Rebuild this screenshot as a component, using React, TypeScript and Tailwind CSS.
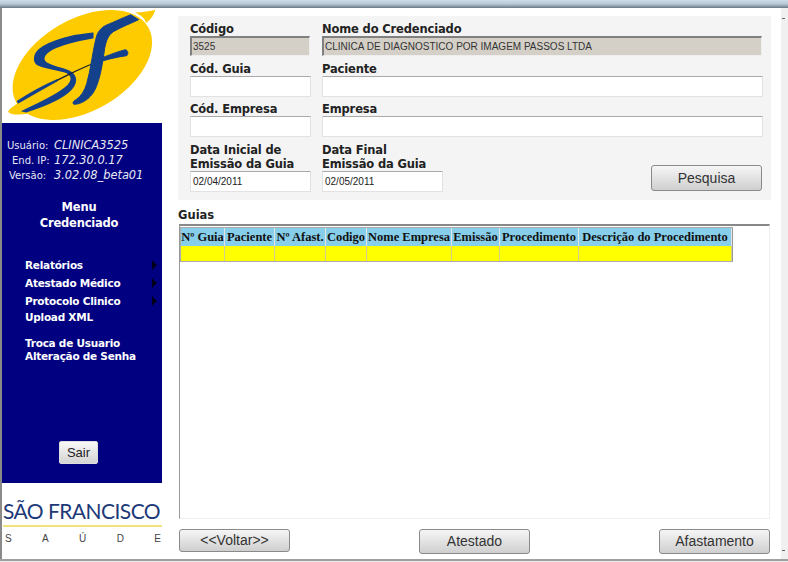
const labelFont = "font-['Tahoma','DejaVu_Sans',sans-serif]";

const guiaColumns = [
  { title: 'Nº Guia', width: 'w-[44px]' },
  { title: 'Paciente', width: 'w-[50px]' },
  { title: 'Nº Afast.', width: 'w-[51px]' },
  { title: 'Codigo', width: 'w-[41px]' },
  { title: 'Nome Empresa', width: 'w-[85px]' },
  { title: 'Emissão', width: 'w-[48px]' },
  { title: 'Procedimento', width: 'w-[79px]' },
  { title: 'Descrição do Procedimento', width: 'w-[153px]' },
];

function SfLogo() {
  return (
    <svg viewBox="6 9 480 345" className="block w-[160px] h-[115px]">
      <ellipse cx="247" cy="180" rx="228" ry="138" transform="rotate(-30 247 180)" fill="#fecb00" />
      {/* swoosh tips */}
      <path d="M405 22 C430 22 450 18 466 14 C462 30 452 44 438 54 C436 40 420 30 405 22 Z" fill="#fecb00" />
      <path d="M60 292 C44 300 30 310 24 320 C32 330 56 330 84 326 C70 316 62 304 60 292 Z" fill="#fecb00" />
      {/* S */}
      <path
        d="M278 85 C220 90 150 108 118 134 C102 148 100 168 112 178 C130 190 170 190 200 202 C218 212 218 226 204 242 C176 270 120 294 70 318 L78 320 C130 304 186 282 214 252 C236 226 226 206 200 196 C176 186 146 184 134 170 C124 156 140 138 170 126 C204 112 244 104 278 98 Z"
        fill="#14418c"
        stroke="#14418c"
        strokeWidth="5"
      />
      {/* sweep */}
      <path d="M50 288 C90 262 130 240 172 222 L174 228 C134 250 94 274 54 296 Z" fill="#14418c" />
      <path d="M170 224 C210 204 250 186 292 168 L292 172 C252 188 212 208 172 228 Z" fill="#1a2030" />
      <path d="M284 168 C316 154 346 142 376 134 C384 136 386 146 380 152 C350 156 316 164 288 174 Z" fill="#14418c" stroke="#14418c" strokeWidth="3" />
      {/* F */}
      <path
        d="M392 29 L416 44 C390 56 360 68 340 80 C324 90 318 110 314 130 C308 170 302 220 284 256 C270 282 244 298 222 298 C216 294 220 288 228 284 C244 274 254 256 260 236 C272 196 278 140 288 100 C292 82 302 68 320 60 C344 50 370 38 392 29 Z"
        fill="#14418c"
        stroke="#14418c"
        strokeWidth="3"
      />
    </svg>
  );
}

function SideMenuItem({ label, arrow, className }: { label: string; arrow?: boolean; className: string }) {
  return (
    <div className={`flex items-center justify-between pl-[23px] pr-[5px] text-[10.5px] tracking-[-0.25px] font-bold text-white ${className}`}>
      <span>{label}</span>
      {arrow && (
        <span className="w-0 h-0 border-y-[5px] border-y-transparent border-l-[5px] border-l-[#00001a]" />
      )}
    </div>
  );
}

function Field({
  label,
  value,
  disabled,
  className,
}: {
  label: React.ReactNode;
  value?: string;
  disabled?: boolean;
  className: string;
}) {
  return (
    <div className={`flex flex-col ${className}`}>
      <div className={`${labelFont} text-[11.5px] tracking-[-0.15px] leading-[14px] font-bold text-[#222]`}>{label}</div>
      <div
        className={
          disabled
            ? "mt-auto h-[20px] bg-[#d4d0c8] border-t-2 border-l-2 border-t-[#808080] border-l-[#808080] border-r border-b border-r-[#eee] border-b-[#eee] pl-px flex items-center font-['Liberation_Sans',sans-serif] text-[10px] text-[#333]"
            : "mt-auto h-[21px] bg-white border border-[#e2e2e2] border-t-[#aaa] pl-[2px] flex items-center font-['Liberation_Sans',sans-serif] text-[10px] text-[#222]"
        }
      >
        {value}
      </div>
    </div>
  );
}

function GrayButton({ label, className }: { label: string; className: string }) {
  return (
    <button
      className={`w-[111px] border border-[#8a8a8a] rounded-[3px] bg-gradient-to-b from-[#f6f6f6] to-[#cfcfcf] font-['Liberation_Sans',sans-serif] text-[14px] text-[#333] ${className}`}
    >
      {label}
    </button>
  );
}

export default function App() {
  return (
    <div className="w-[788px] h-[562px] overflow-hidden flex flex-col bg-white font-['Liberation_Sans',sans-serif]">
      {/* browser chrome */}
      <div className="h-[8px] shrink-0 bg-gradient-to-b from-[#cfdde8] via-[#b7c9d8] to-[#6b7a86]" />

      <div className="flex flex-1 min-h-0 border-l-2 border-l-[#8a8a8a]">
        {/* side column */}
        <div className="w-[160px] shrink-0 mr-[16px] flex flex-col">
          <SfLogo />
          <div className="h-[360px] w-[160px] bg-[#000080] flex flex-col">
            <div className={`${labelFont} pt-[15px] text-[10px] leading-[15px] text-[#e8e8f4]`}>
              <div className="flex h-[15px]">
                <span className="w-[52px] pl-[5px]">Usuário:</span>
                <span className="italic text-[11.4px]">CLINICA3525</span>
              </div>
              <div className="flex h-[15px]">
                <span className="w-[52px] pl-[10px]">End. IP:</span>
                <span className="italic text-[11.4px]">172.30.0.17</span>
              </div>
              <div className="flex h-[15px]">
                <span className="w-[52px] pl-[7px]">Versão:</span>
                <span className="italic text-[11.4px]">3.02.08_beta01</span>
              </div>
            </div>
            <div className={`${labelFont} mt-[16px] pr-[6px] text-center text-[11.5px] tracking-[-0.2px] leading-[16px] font-bold text-white`}>
              <div>Menu</div>
              <div>Credenciado</div>
            </div>
            <div className={`${labelFont} mt-[25px] leading-[14px]`}>
              <SideMenuItem label="Relatórios" arrow className="h-[18px]" />
              <SideMenuItem label="Atestado Médico" arrow className="h-[18px]" />
              <SideMenuItem label="Protocolo Clinico" arrow className="h-[18px]" />
              <SideMenuItem label="Upload XML" className="h-[14px]" />
              <SideMenuItem label="Troca de Usuario" className="h-[13px] mt-[12px]" />
              <SideMenuItem label="Alteração de Senha" className="h-[13px]" />
            </div>
            <button className="mt-auto mb-[19px] ml-[57px] w-[39px] h-[23px] border border-[#ddd] rounded-[2px] bg-gradient-to-b from-[#f8f8f8] to-[#d4d4d4] text-[13px] text-[#222]">
              Sair
            </button>
          </div>
          <div className="pl-px">
            <div className="mt-[16px] text-[21px] leading-[24px] tracking-[-0.55px] text-[#1d3a78] font-['Lato',sans-serif] whitespace-nowrap">
              SÃO FRANCISCO
            </div>
            <div className="mt-[2px] h-[2px] bg-[#f2e27a]" />
            <div className="mt-[6px] flex justify-between pl-[2px] pr-[1px] text-[10px] leading-[12px] text-[#444]">
              <span>S</span>
              <span>A</span>
              <span>Ú</span>
              <span>D</span>
              <span>E</span>
            </div>
          </div>
        </div>

        {/* main column */}
        <div className="w-[593px] shrink-0 flex flex-col pt-[8px]">
          <div className="h-[184px] bg-[#f4f4f4] pl-[12px] pr-[8px] pt-[6px] flex flex-col">
            <div className="flex gap-[12px] h-[34px]">
              <Field label="Código" value="3525" disabled className="w-[120px]" />
              <Field label="Nome do Credenciado" value="CLINICA DE DIAGNOSTICO POR IMAGEM PASSOS LTDA" disabled className="w-[440px]" />
            </div>
            <div className="flex gap-[11px] h-[35px] mt-[6px]">
              <Field label="Cód. Guia" className="w-[121px]" />
              <Field label="Paciente" className="w-[441px]" />
            </div>
            <div className="flex gap-[11px] h-[35px] mt-[5px]">
              <Field label="Cód. Empresa" className="w-[121px]" />
              <Field label="Empresa" className="w-[441px]" />
            </div>
            <div className="flex gap-[11px] h-[50px] mt-[5px] items-start">
              <Field
                label={<div className="pt-px">Data Inicial de<br />Emissão da Guia</div>}
                value="02/04/2011"
                className="w-[121px] h-[50px]"
              />
              <Field
                label={<div className="pt-px">Data Final<br />Emissão da Guia</div>}
                value="02/05/2011"
                className="w-[121px] h-[50px]"
              />
              <GrayButton label="Pesquisa" className="h-[26px] ml-[197px] mt-[23px]" />
            </div>
          </div>

          <div className={`${labelFont} mt-[8px] text-[11.5px] leading-[14px] font-bold text-[#222]`}>Guias</div>

          <div className="mt-[2px] ml-px w-[591px] h-[295px] border-t-2 border-l border-t-[#888] border-l-[#999] border-r border-b border-r-[#eee] border-b-[#eee] pt-px">
            <div className="w-[553px] border border-[#aaa] border-r-[#999] font-['Liberation_Serif',serif] text-[12.5px] font-bold text-[#111]">
              <div className="flex h-[18px] bg-[#87ceeb]">
                {guiaColumns.map((col) => (
                  <div key={col.title} className={`${col.width} shrink-0 border-r border-[#e4e4e4] flex items-center justify-center whitespace-nowrap`}>
                    {col.title}
                  </div>
                ))}
              </div>
              <div className="flex h-[15px] bg-[#ffff00]">
                {guiaColumns.map((col) => (
                  <div key={col.title} className={`${col.width} shrink-0 border-r border-[#cfcf90]`} />
                ))}
              </div>
            </div>
          </div>

          <div className="mt-[10px] ml-px w-[591px] flex justify-between items-start">
            <GrayButton label="<<Voltar>>" className="h-[23px]" />
            <GrayButton label="Atestado" className="h-[25px]" />
            <GrayButton label="Afastamento" className="h-[25px]" />
          </div>
        </div>

        {/* scrollbar strip */}
        <div className="ml-auto w-[7px] bg-[#f0f0f0] relative">
          <span className="absolute left-[1px] top-[10px] w-[3px] h-px bg-[#666]" />
          <span className="absolute left-[1px] bottom-[8px] w-[3px] h-px bg-[#666]" />
        </div>
      </div>

      {/* window bottom edge */}
      <div className="h-[3px] shrink-0 border-t-2 border-t-[#a0a0a0] bg-[#e8e8e8]" />
    </div>
  );
}
